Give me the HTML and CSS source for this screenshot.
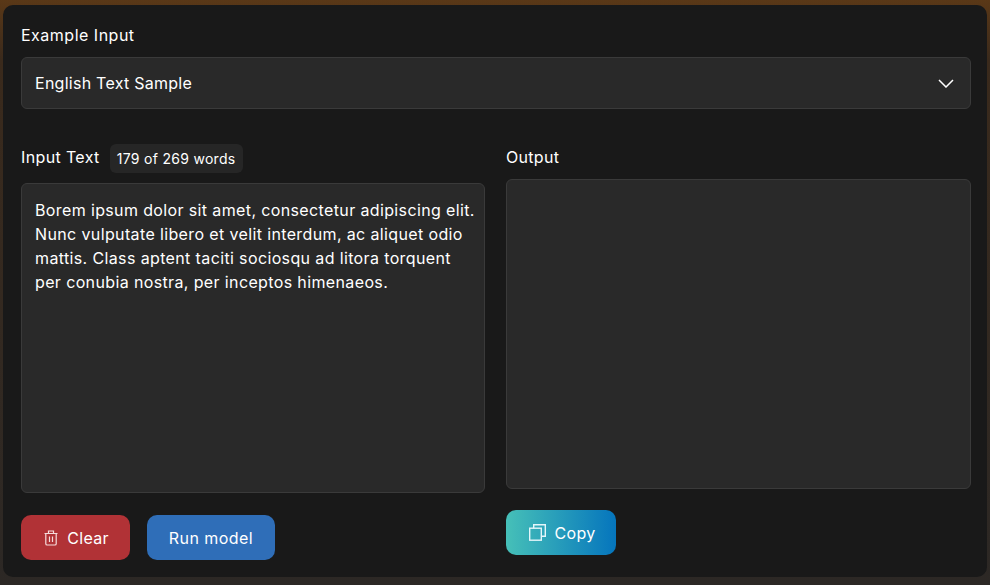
FILE: index.html
```html
<!DOCTYPE html>
<html lang="en">
<head>
<meta charset="utf-8">
<title>Model demo</title>
<link rel="stylesheet" href="styles.css">
</head>
<body>
<main class="card">
  <section class="example">
    <div class="label label-example">Example Input</div>
    <div class="select">
      <span>English Text Sample</span>
      <svg class="chevron" width="16" height="9" viewBox="0 0 16 9" fill="none"><path d="M1 1 8 8 15 1" stroke="#fff" stroke-width="1.5"/></svg>
    </div>
  </section>
  <section class="columns">
    <div class="col">
      <div class="head head-input">
        <span class="label label-input">Input Text</span>
        <span class="badge">179 of 269 words</span>
      </div>
      <div class="box box-input">Borem ipsum dolor sit amet, consectetur adipiscing elit. Nunc vulputate libero et velit interdum, ac aliquet odio mattis. Class aptent taciti sociosqu ad litora torquent per conubia nostra, per inceptos himenaeos.</div>
      <div class="actions actions-input">
        <button class="btn btn-clear">
          <svg width="14" height="16" viewBox="0 0 14 16" fill="none" stroke="#f6dcdc" stroke-width="1.2"><path d="M.5 3.5h13M4.5 3.5V1h5v2.5M1.8 3.5v10.2q0 1.3 1.3 1.3h7.8q1.3 0 1.3-1.3V3.5M5.5 6.5v5.5M8.5 6.5v5.5"/></svg>
          Clear
        </button>
        <button class="btn btn-run">Run model</button>
      </div>
    </div>
    <div class="col">
      <div class="head"><span class="label">Output</span></div>
      <div class="box box-output"></div>
      <div class="actions">
        <button class="btn btn-copy">
          <svg width="17" height="17" viewBox="0 0 17 17" fill="none" stroke="#e4f6fa" stroke-width="1.4"><rect x=".7" y="4.2" width="11.6" height="12"/><path d="M4.7 4.2V.8h11.6v11.5h-4"/></svg>
          Copy
        </button>
      </div>
    </div>
  </section>
</main>
</body>
</html>
```
FILE: styles.css
```css
* { box-sizing: border-box; }
html, body { height: 100%; }
body {
  margin: 0;
  padding: 5px 3px 8px;
  background: linear-gradient(180deg, #5a3817 0, #3a2a1c 60px, #2c2825 100%);
  font-family: "Inter", "Open Sans", sans-serif;
  color: #fff;
  overflow: hidden;
}
.card {
  height: 572px;
  background: #191919;
  border-radius: 10px;
  padding: 20px 16px 0 18px;
}
.label { font-size: 16px; line-height: 20px; letter-spacing: 0.3px; }
.label-example { letter-spacing: 0.5px; padding-bottom: 1px; margin-bottom: -1px; }
.label-input { letter-spacing: 0.36px; padding-bottom: 2px; }
.select {
  margin-top: 12px;
  height: 52px;
  background: #292929;
  border: 1px solid #3a3a3a;
  border-radius: 6px;
  padding: 0 16px 0 13px;
  display: flex;
  align-items: center;
  justify-content: space-between;
  font-size: 16px;
  letter-spacing: 0.26px;
}
.columns {
  margin-top: 35px;
  display: grid;
  grid-template-columns: 464px 465px;
  gap: 21px;
}
.col { display: flex; flex-direction: column; }
.head { display: flex; align-items: center; gap: 10px; height: 26px; margin-bottom: 10px; }
.head:not(.head-input) { margin-bottom: 9px; }
.head-input { height: 30px; margin-bottom: 10px; margin-top: -1px; }
.badge {
  height: 29px;
  padding: 0 7px;
  display: flex;
  align-items: center;
  background: #262626;
  border-radius: 6px;
  font-size: 14px;
  letter-spacing: 0.3px;
}
.box {
  background: #292929;
  border: 1px solid #3a3a3a;
  border-radius: 6px;
  height: 310px;
  padding: 14px 7px 14px 13px;
  font-size: 16px;
  line-height: 24px;
  letter-spacing: 0.37px;
}
.actions { display: flex; gap: 17px; margin-top: 21px; }
.actions-input { margin-top: 22px; }
.btn {
  height: 45px;
  border: 0;
  border-radius: 10px;
  color: #fff;
  font: inherit;
  font-size: 16px;
  letter-spacing: 0.26px;
  display: flex;
  align-items: center;
  justify-content: center;
  gap: 9px;
}
.btn-clear { width: 109px; padding-left: 8px; background: #b13236; }
.btn-run { width: 128px; letter-spacing: 0.45px; background: #2f6eb8; }
.btn-copy { width: 110px; padding-left: 8px; background: linear-gradient(90deg, #46c0b8, #0575bd); }
```
